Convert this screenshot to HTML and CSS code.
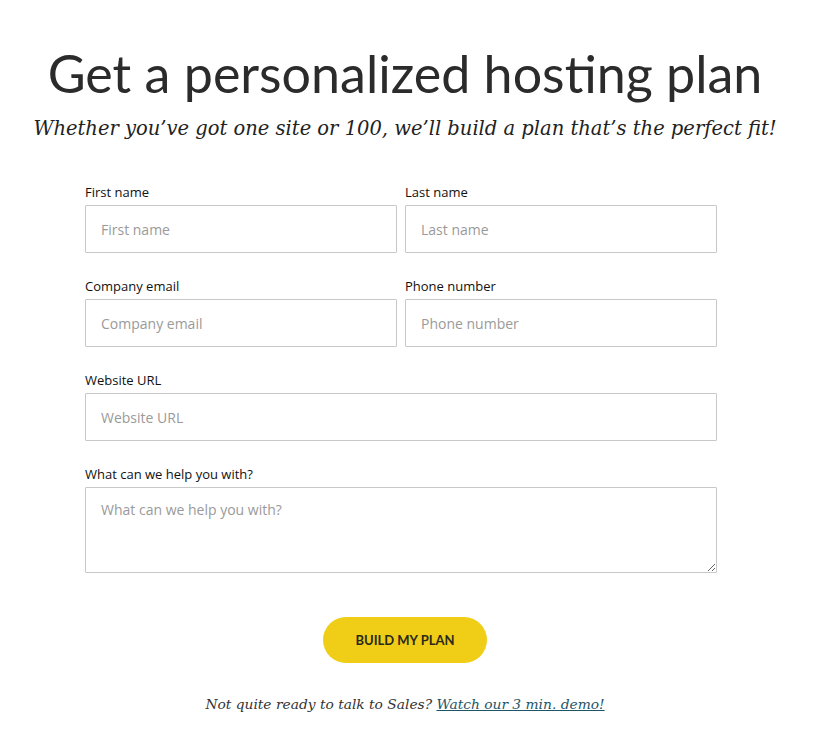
FILE: index.html
```html
<!DOCTYPE html>
<html>
<head>
<meta charset="utf-8">
<link rel="stylesheet" href="styles.css">
</head>
<body>
<div class="page">
  <h1 class="title">Get a personalized hosting plan</h1>
  <p class="subtitle">Whether you’ve got one site or 100, we’ll build a plan that’s the perfect fit!</p>
  <form class="form">
    <div class="row two">
      <div class="field">
        <label class="label">First name</label>
        <input class="input" type="text" placeholder="First name">
      </div>
      <div class="field">
        <label class="label">Last name</label>
        <input class="input" type="text" placeholder="Last name">
      </div>
    </div>
    <div class="row two">
      <div class="field">
        <label class="label">Company email</label>
        <input class="input" type="text" placeholder="Company email">
      </div>
      <div class="field">
        <label class="label">Phone number</label>
        <input class="input" type="text" placeholder="Phone number">
      </div>
    </div>
    <div class="row">
      <div class="field">
        <label class="label">Website URL</label>
        <input class="input" type="text" placeholder="Website URL">
      </div>
    </div>
    <div class="row">
      <div class="field">
        <label class="label">What can we help you with?</label>
        <textarea class="textarea" placeholder="What can we help you with?"></textarea>
      </div>
    </div>
  </form>
  <div class="actions">
    <button class="btn" type="button">BUILD MY PLAN</button>
  </div>
  <p class="footer">Not quite ready to talk to Sales? <a class="link" href="#">Watch our 3 min. demo!</a></p>
</div>
</body>
</html>
```
FILE: styles.css
```css
html, body {
  margin: 0;
  padding: 0;
  background: #fff;
}
.page {
  width: 810px;
  padding-top: 43px;
  color: #2a2a2a;
}
.title {
  margin: 0;
  text-align: center;
  font-family: Lato, "Open Sans", sans-serif;
  font-weight: 400;
  font-size: 52px;
  line-height: 60px;
  color: #2b2b2b;
}
.subtitle {
  margin: 12px 0 0;
  text-align: center;
  font-family: "DejaVu Serif", "Liberation Serif", serif;
  font-style: italic;
  font-size: 19.5px;
  line-height: 28px;
  color: #222;
}
.form {
  width: 632px;
  margin: 41px 0 0 85px;
  display: flex;
  flex-direction: column;
  gap: 25px;
}
.row {
  display: flex;
  gap: 8px;
}
.field {
  flex: 1;
  display: flex;
  flex-direction: column;
}
.label {
  font-family: "Open Sans", sans-serif;
  font-size: 13px;
  line-height: 16px;
  color: #111;
  margin-bottom: 5px;
}
.input, .textarea {
  box-sizing: border-box;
  width: 100%;
  border: 1px solid #c8c8c8;
  border-radius: 1px;
  padding: 0 15px;
  font-family: "Open Sans", sans-serif;
  font-size: 14px;
  color: #333;
  background: #fff;
  outline: none;
}
.input {
  height: 48px;
}
.textarea {
  height: 86px;
  padding-top: 12px;
  resize: vertical;
  display: block;
}
.input::placeholder, .textarea::placeholder {
  color: #9a9a9a;
}
.actions {
  display: flex;
  justify-content: center;
  margin-top: 44px;
}
.btn {
  width: 164px;
  height: 46px;
  border: none;
  border-radius: 23px;
  background: #f0cd17;
  font-family: Lato, sans-serif;
  font-weight: 700;
  font-size: 13px;
  color: #2a2a1a;
  cursor: pointer;
}
.footer {
  margin: 33px 0 0;
  text-align: center;
  font-family: "DejaVu Serif", serif;
  font-style: italic;
  font-size: 13.8px;
  color: #333;
}
.link {
  color: #1e5566;
  text-decoration: underline;
}
```
